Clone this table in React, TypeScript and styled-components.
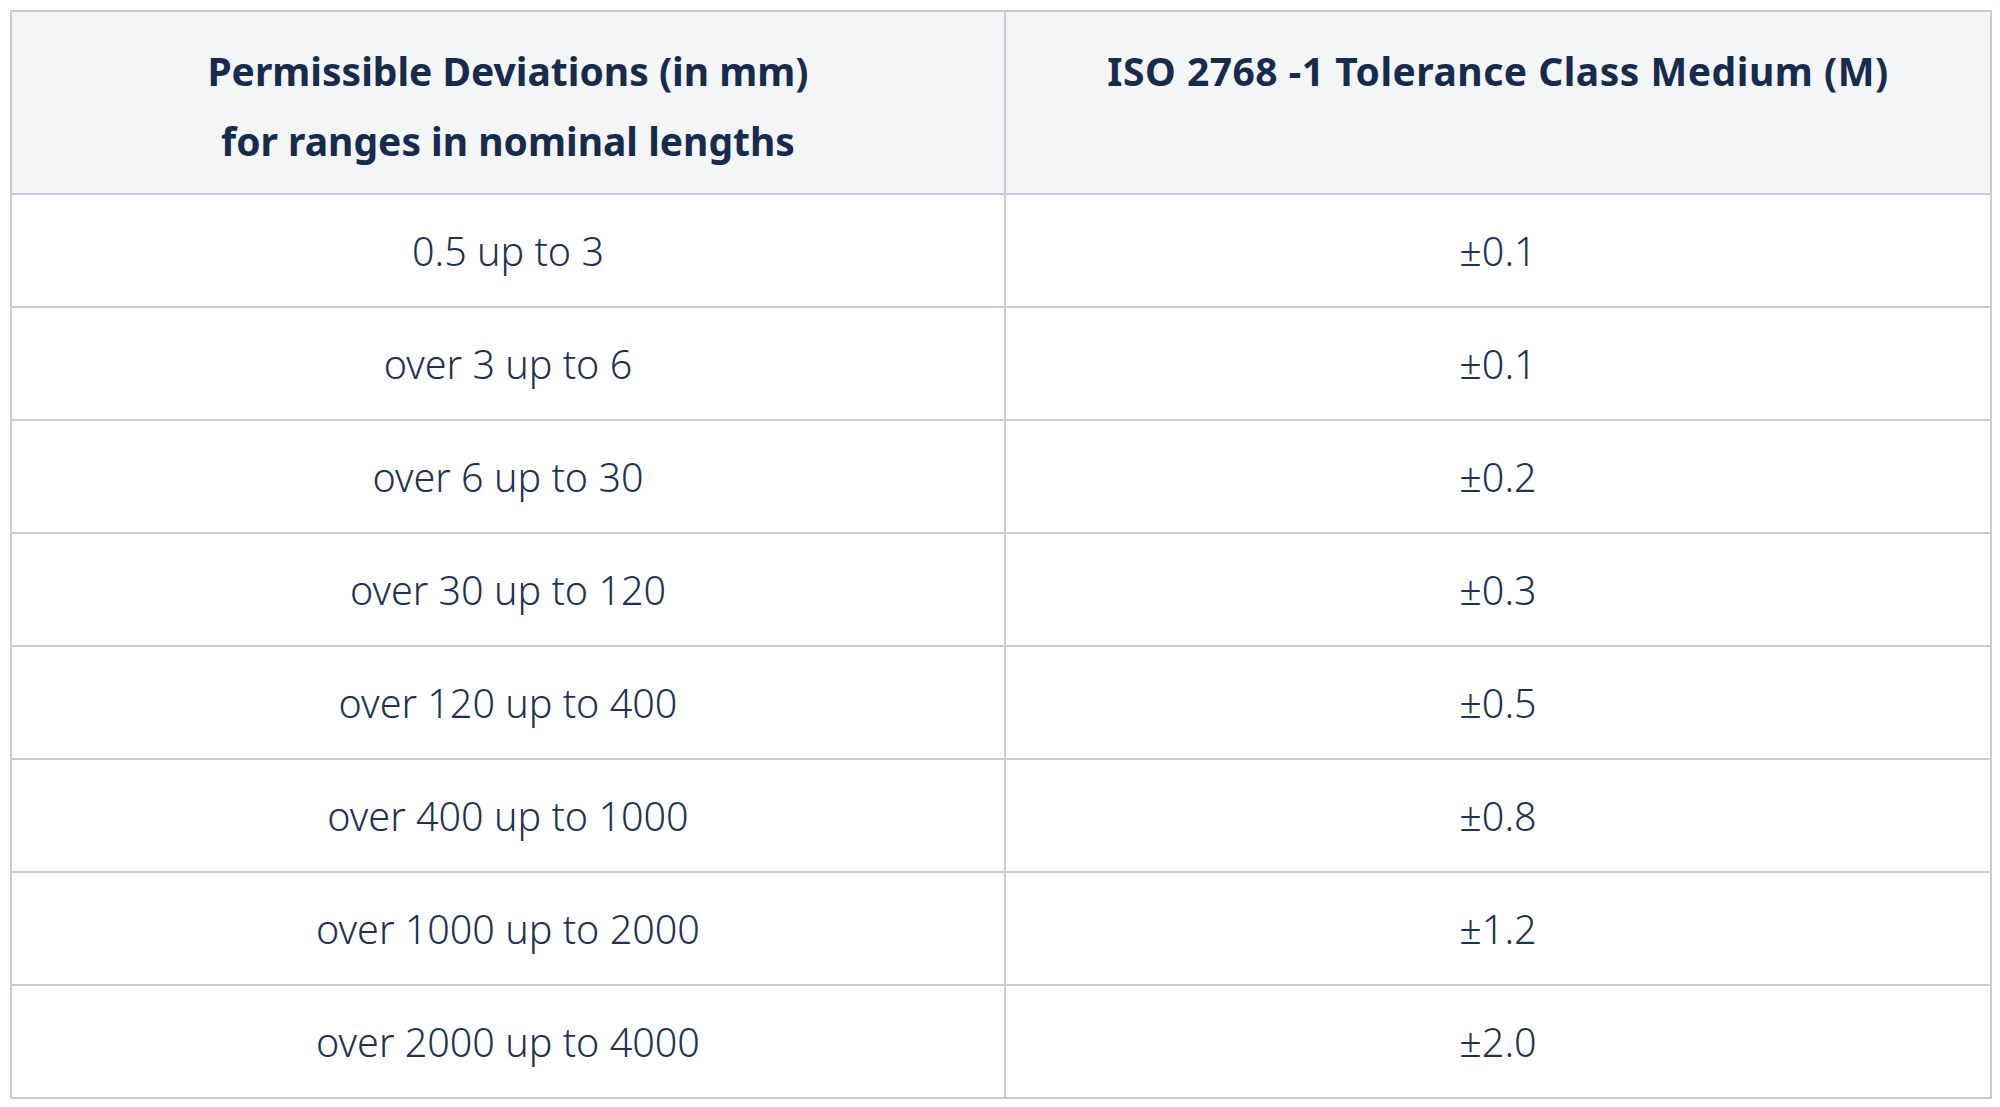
import React from "react";
import styled, { createGlobalStyle } from "styled-components";

const GlobalStyle = createGlobalStyle`
  html, body {
    margin: 0;
    padding: 0;
    background: #ffffff;
  }
`;

const Page = styled.div`
  padding: 10px 8px 8px 10px;
  font-family: "Noto Sans", "Open Sans", sans-serif;
  color: #172b4d;
`;

const Table = styled.table`
  width: 100%;
  border-collapse: collapse;
  table-layout: fixed;
  border: 2px solid #c7ccd5;
`;

const HeadCell = styled.th<{ $spacing?: number }>`
  height: 183px;
  padding: 24px 16px 10px;
  box-sizing: border-box;
  background: #f4f5f7;
  border: 2px solid #c7ccd5;
  font-size: 39px;
  font-weight: 700;
  line-height: 70px;
  letter-spacing: ${(p) => p.$spacing ?? 0}px;
  text-align: center;
  vertical-align: top;
  white-space: nowrap;
`;

const Cell = styled.td`
  height: 113px;
  padding: 0 20px;
  box-sizing: border-box;
  border: 2px solid #c7ccd5;
  font-size: 39.5px;
  font-weight: 300;
  text-align: center;
  vertical-align: middle;
  color: #1f3255;
`;

const rows: [string, string][] = [
  ["0.5 up to 3", "±0.1"],
  ["over 3 up to 6", "±0.1"],
  ["over 6 up to 30", "±0.2"],
  ["over 30 up to 120", "±0.3"],
  ["over 120 up to 400", "±0.5"],
  ["over 400 up to 1000", "±0.8"],
  ["over 1000 up to 2000", "±1.2"],
  ["over 2000 up to 4000", "±2.0"],
];

const App = () => {
  return (
    <Page>
      <GlobalStyle />
      <Table>
        <colgroup>
          <col style={{ width: "50.2%" }} />
          <col />
        </colgroup>
        <thead>
          <tr>
            <HeadCell>
              Permissible Deviations (in mm)
              <br />
              for ranges in nominal lengths
            </HeadCell>
            <HeadCell $spacing={0.5}>ISO 2768 -1 Tolerance Class Medium (M)</HeadCell>
          </tr>
        </thead>
        <tbody>
          {rows.map(([range, tol], i) => (
            <tr key={i}>
              <Cell>{range}</Cell>
              <Cell>{tol}</Cell>
            </tr>
          ))}
        </tbody>
      </Table>
    </Page>
  );
};

export default App;
